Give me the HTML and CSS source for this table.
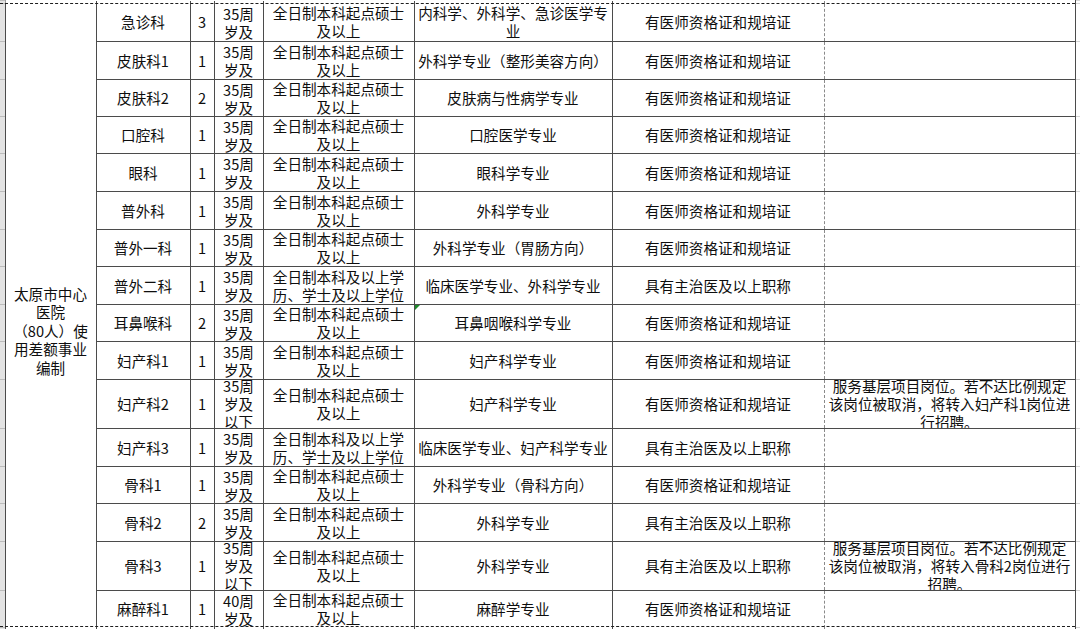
FILE: index.html
```html
<!DOCTYPE html>
<html lang="zh-CN">
<head>
<meta charset="utf-8">
<title>招聘岗位表</title>
<link rel="stylesheet" href="styles.css">
</head>
<body>
<div class="sheet">
<table class="grid">
<colgroup>
<col class="w-strip"><col class="w-unit"><col class="w-dept"><col class="w-num"><col class="w-age"><col class="w-edu"><col class="w-major"><col class="w-cert"><col class="w-note"><col class="w-rstrip">
</colgroup>
<tbody>
<tr class="r0">
<td class="strip"><div class="c"></div></td>
<td class="unit" rowspan="18">太原市中心<br>医院<br>（80人）使<br>用差额事业<br>编制</td>
<td class="dept"><div class="c"></div></td><td class="num"><div class="c"></div></td><td class="age"><div class="c"></div></td><td class="edu"><div class="c"></div></td><td class="major"><div class="c"></div></td><td class="cert"><div class="c"></div></td><td class="note"><div class="c"></div></td><td class="rstrip"><div class="c"></div></td>
</tr>
<tr class="h38 first">
<td class="strip"><div class="c"></div></td>
<td class="dept"><div class="c">急诊科</div></td><td class="num"><div class="c">3</div></td><td class="age"><div class="c"><span>35周岁及以下</span></div></td><td class="edu"><div class="c">全日制本科起点硕士及以上</div></td><td class="major"><div class="c">内科学、外科学、急诊医学专业</div></td><td class="cert"><div class="c">有医师资格证和规培证</div></td><td class="note"><div class="c"></div></td><td class="rstrip"><div class="c"></div></td>
</tr>
<tr class="h38">
<td class="strip"><div class="c"></div></td>
<td class="dept"><div class="c">皮肤科1</div></td><td class="num"><div class="c">1</div></td><td class="age"><div class="c"><span>35周岁及以下</span></div></td><td class="edu"><div class="c">全日制本科起点硕士及以上</div></td><td class="major"><div class="c">外科学专业（整形美容方向）</div></td><td class="cert"><div class="c">有医师资格证和规培证</div></td><td class="note"><div class="c"></div></td><td class="rstrip"><div class="c"></div></td>
</tr>
<tr class="h37">
<td class="strip"><div class="c"></div></td>
<td class="dept"><div class="c">皮肤科2</div></td><td class="num"><div class="c">2</div></td><td class="age"><div class="c"><span>35周岁及以下</span></div></td><td class="edu"><div class="c">全日制本科起点硕士及以上</div></td><td class="major"><div class="c">皮肤病与性病学专业</div></td><td class="cert"><div class="c">有医师资格证和规培证</div></td><td class="note"><div class="c"></div></td><td class="rstrip"><div class="c"></div></td>
</tr>
<tr class="h37">
<td class="strip"><div class="c"></div></td>
<td class="dept"><div class="c">口腔科</div></td><td class="num"><div class="c">1</div></td><td class="age"><div class="c"><span>35周岁及以下</span></div></td><td class="edu"><div class="c">全日制本科起点硕士及以上</div></td><td class="major"><div class="c">口腔医学专业</div></td><td class="cert"><div class="c">有医师资格证和规培证</div></td><td class="note"><div class="c"></div></td><td class="rstrip"><div class="c"></div></td>
</tr>
<tr class="h38">
<td class="strip"><div class="c"></div></td>
<td class="dept"><div class="c">眼科</div></td><td class="num"><div class="c">1</div></td><td class="age"><div class="c"><span>35周岁及以下</span></div></td><td class="edu"><div class="c">全日制本科起点硕士及以上</div></td><td class="major"><div class="c">眼科学专业</div></td><td class="cert"><div class="c">有医师资格证和规培证</div></td><td class="note"><div class="c"></div></td><td class="rstrip"><div class="c"></div></td>
</tr>
<tr class="h38">
<td class="strip"><div class="c"></div></td>
<td class="dept"><div class="c">普外科</div></td><td class="num"><div class="c">1</div></td><td class="age"><div class="c"><span>35周岁及以下</span></div></td><td class="edu"><div class="c">全日制本科起点硕士及以上</div></td><td class="major"><div class="c">外科学专业</div></td><td class="cert"><div class="c">有医师资格证和规培证</div></td><td class="note"><div class="c"></div></td><td class="rstrip"><div class="c"></div></td>
</tr>
<tr class="h37">
<td class="strip"><div class="c"></div></td>
<td class="dept"><div class="c">普外一科</div></td><td class="num"><div class="c">1</div></td><td class="age"><div class="c"><span>35周岁及以下</span></div></td><td class="edu"><div class="c">全日制本科起点硕士及以上</div></td><td class="major"><div class="c">外科学专业（胃肠方向）</div></td><td class="cert"><div class="c">有医师资格证和规培证</div></td><td class="note"><div class="c"></div></td><td class="rstrip"><div class="c"></div></td>
</tr>
<tr class="h38">
<td class="strip"><div class="c"></div></td>
<td class="dept"><div class="c">普外二科</div></td><td class="num"><div class="c">1</div></td><td class="age"><div class="c"><span>35周岁及以下</span></div></td><td class="edu"><div class="c">全日制本科及以上学历、学士及以上学位</div></td><td class="major"><div class="c">临床医学专业、外科学专业</div></td><td class="cert"><div class="c">具有主治医及以上职称</div></td><td class="note"><div class="c"></div></td><td class="rstrip"><div class="c"></div></td>
</tr>
<tr class="h37">
<td class="strip"><div class="c"></div></td>
<td class="dept"><div class="c">耳鼻喉科</div></td><td class="num"><div class="c">2</div></td><td class="age"><div class="c"><span>35周岁及以下</span></div></td><td class="edu"><div class="c">全日制本科起点硕士及以上</div></td><td class="major"><div class="c flagged"><i class="err"></i>耳鼻咽喉科学专业</div></td><td class="cert"><div class="c">有医师资格证和规培证</div></td><td class="note"><div class="c"></div></td><td class="rstrip"><div class="c"></div></td>
</tr>
<tr class="h38">
<td class="strip"><div class="c"></div></td>
<td class="dept"><div class="c">妇产科1</div></td><td class="num"><div class="c">1</div></td><td class="age"><div class="c"><span>35周岁及以下</span></div></td><td class="edu"><div class="c">全日制本科起点硕士及以上</div></td><td class="major"><div class="c">妇产科学专业</div></td><td class="cert"><div class="c">有医师资格证和规培证</div></td><td class="note"><div class="c"></div></td><td class="rstrip"><div class="c"></div></td>
</tr>
<tr class="h49">
<td class="strip"><div class="c"></div></td>
<td class="dept"><div class="c">妇产科2</div></td><td class="num"><div class="c">1</div></td><td class="age"><div class="c"><span>35周岁及以下</span></div></td><td class="edu"><div class="c">全日制本科起点硕士及以上</div></td><td class="major"><div class="c">妇产科学专业</div></td><td class="cert"><div class="c">有医师资格证和规培证</div></td><td class="note"><div class="c"><span>服务基层项目岗位。若不达比例规定该岗位被取消，将转入妇产科1岗位进行招聘。</span></div></td><td class="rstrip"><div class="c"></div></td>
</tr>
<tr class="h38">
<td class="strip"><div class="c"></div></td>
<td class="dept"><div class="c">妇产科3</div></td><td class="num"><div class="c">1</div></td><td class="age"><div class="c"><span>35周岁及以下</span></div></td><td class="edu"><div class="c">全日制本科及以上学历、学士及以上学位</div></td><td class="major"><div class="c">临床医学专业、妇产科学专业</div></td><td class="cert"><div class="c">具有主治医及以上职称</div></td><td class="note"><div class="c"></div></td><td class="rstrip"><div class="c"></div></td>
</tr>
<tr class="h37">
<td class="strip"><div class="c"></div></td>
<td class="dept"><div class="c">骨科1</div></td><td class="num"><div class="c">1</div></td><td class="age"><div class="c"><span>35周岁及以下</span></div></td><td class="edu"><div class="c">全日制本科起点硕士及以上</div></td><td class="major"><div class="c">外科学专业（骨科方向）</div></td><td class="cert"><div class="c">有医师资格证和规培证</div></td><td class="note"><div class="c"></div></td><td class="rstrip"><div class="c"></div></td>
</tr>
<tr class="h38">
<td class="strip"><div class="c"></div></td>
<td class="dept"><div class="c">骨科2</div></td><td class="num"><div class="c">2</div></td><td class="age"><div class="c"><span>35周岁及以下</span></div></td><td class="edu"><div class="c">全日制本科起点硕士及以上</div></td><td class="major"><div class="c">外科学专业</div></td><td class="cert"><div class="c">具有主治医及以上职称</div></td><td class="note"><div class="c"></div></td><td class="rstrip"><div class="c"></div></td>
</tr>
<tr class="h49">
<td class="strip"><div class="c"></div></td>
<td class="dept"><div class="c">骨科3</div></td><td class="num"><div class="c">1</div></td><td class="age"><div class="c"><span>35周岁及以下</span></div></td><td class="edu"><div class="c">全日制本科起点硕士及以上</div></td><td class="major"><div class="c">外科学专业</div></td><td class="cert"><div class="c">具有主治医及以上职称</div></td><td class="note"><div class="c"><span>服务基层项目岗位。若不达比例规定该岗位被取消，将转入骨科2岗位进行招聘。</span></div></td><td class="rstrip"><div class="c"></div></td>
</tr>
<tr class="h37 last">
<td class="strip"><div class="c"></div></td>
<td class="dept"><div class="c">麻醉科1</div></td><td class="num"><div class="c">1</div></td><td class="age"><div class="c"><span>40周岁及以下</span></div></td><td class="edu"><div class="c">全日制本科起点硕士及以上</div></td><td class="major"><div class="c">麻醉学专业</div></td><td class="cert"><div class="c">有医师资格证和规培证</div></td><td class="note"><div class="c"></div></td><td class="rstrip"><div class="c"></div></td>
</tr>
<tr class="h33 after">
<td class="strip"><div class="c"></div></td>
<td class="dept"><div class="c"></div></td><td class="num"><div class="c"></div></td><td class="age"><div class="c"><span>35周岁及以下</span></div></td><td class="edu"><div class="c"></div></td><td class="major"><div class="c"></div></td><td class="cert"><div class="c"></div></td><td class="note"><div class="c"></div></td><td class="rstrip"><div class="c"></div></td>
</tr>
</tbody>
</table>
<div class="pagebreak pb-top"></div>
<div class="pagebreak pb-bottom"></div>
</div>
</body>
</html>
```

FILE: styles.css
```css
html, body {
  margin: 0;
  padding: 0;
  background: #fff;
  overflow: hidden;
}
body {
  width: 1080px;
  height: 629px;
  font-family: "Noto Sans CJK SC", "Noto Sans", sans-serif;
  font-size: 14.6px;
  color: #0e0e0e;
}
.sheet {
  position: relative;
  width: 1080px;
  height: 629px;
  overflow: hidden;
}
.grid {
  border-collapse: collapse;
  table-layout: fixed;
  width: 1080px;
}
.w-strip { width: 5px; }
.w-unit { width: 91px; }
.w-dept { width: 94px; }
.w-num { width: 24px; }
.w-age { width: 49px; }
.w-edu { width: 151px; }
.w-major { width: 198px; }
.w-cert { width: 212px; }
.w-note { width: 251px; }
.w-rstrip { width: 5px; }

.grid td {
  border: 1px solid #4b4b4b;
  padding: 0;
  text-align: center;
  vertical-align: middle;
  line-height: 18px;
}
.c {
  box-sizing: border-box;
  display: flex;
  align-items: center;
  justify-content: center;
  overflow: hidden;
  padding: 0 2px;
}
.r0 .c { height: 2px; }
.h33 .c { height: 33px; }
.h37 .c { height: 36px; }
.h38 .c { height: 37px; }
.h49 .c { height: 48px; }

.grid .r0 td { border-top: none; border-bottom: none; }
.grid .first td { border-top: none; }
.grid .last td { border-bottom: none; }
.grid .after td { border-top: none; }

.grid td.unit {
  line-height: 18.5px;
  border-left: 1px solid #4b4b4b;
  padding-top: 0;
}
.edu .c { padding: 0 3px; }
.age .c {
  padding: 1px 4px 0;
  align-items: flex-start;
}
.h49 .age .c {
  align-items: center;
  padding-top: 0;
}
.grid td.cert { border-right: 1px dashed #8a8a8a; }
.grid td.note { border-left: 1px dashed #8a8a8a; }

.grid td.strip {
  background: #e3e3e3;
  border-left: none;
  border-top: 1px solid #bcbcbc;
  border-bottom: 1px solid #bcbcbc;
  border-right: 1px solid #9c9c9c;
}
.grid td.rstrip {
  background: #fff;
  border-right: none;
  border-top: 1px solid #d4d4d4;
  border-bottom: 1px solid #d4d4d4;
}
.grid td.strip .c, .grid td.rstrip .c { padding: 0; }

.flagged { position: relative; }
.err {
  position: absolute;
  left: 0;
  top: 0;
  width: 0;
  height: 0;
  border-top: 5px solid #1f8a2c;
  border-right: 5px solid transparent;
}

.pagebreak {
  position: absolute;
  left: 0;
  width: 1075px;
  height: 0;
  border-top: 1px dashed #1e1e1e;
}
.pb-top { top: 3px; }
.pb-bottom { top: 626px; }
```
